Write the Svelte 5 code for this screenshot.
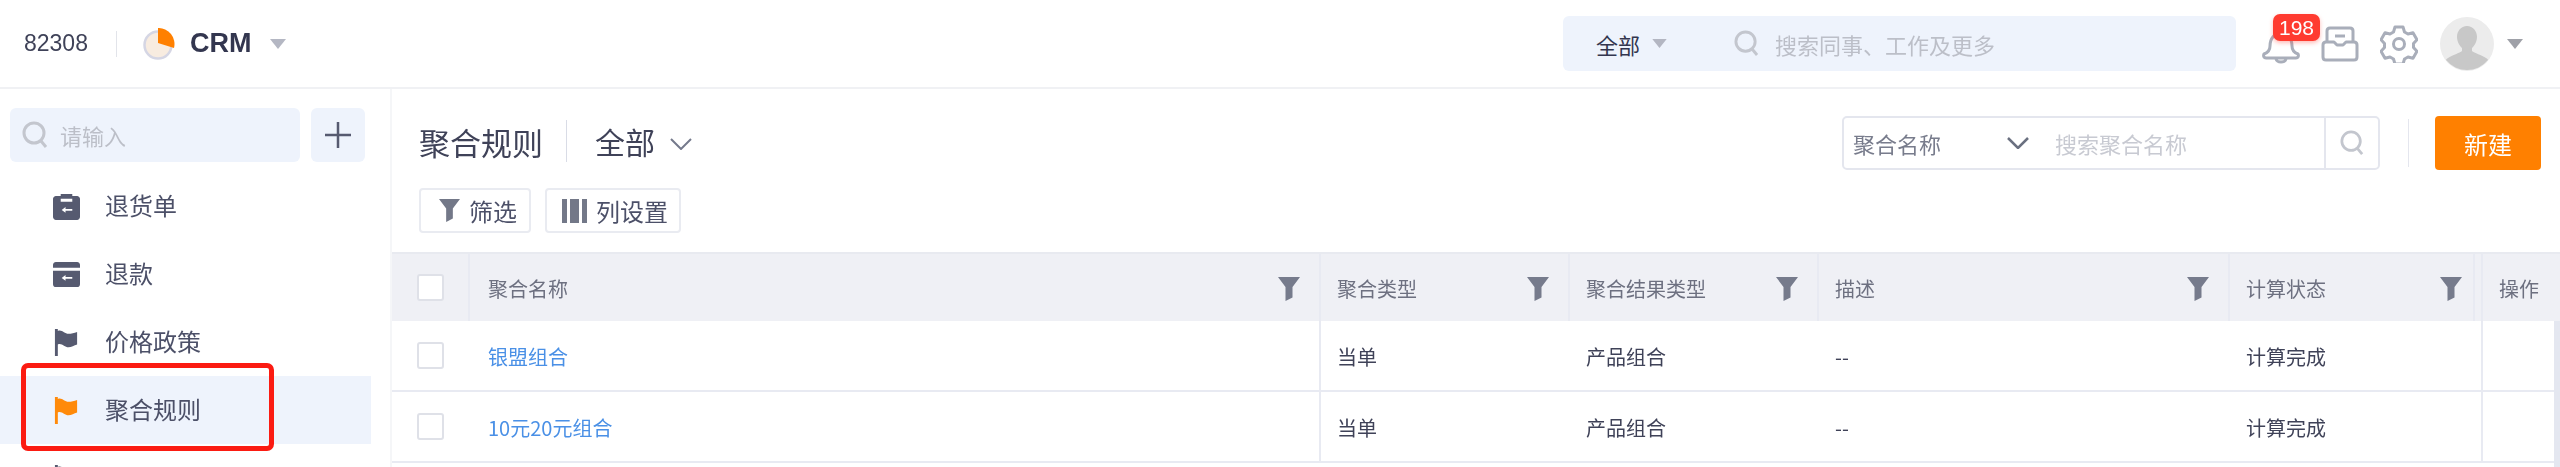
<script>
  const menu = [
    { label: "退货单", icon: "clipboard" },
    { label: "退款", icon: "refund" },
    { label: "价格政策", icon: "flag" },
    { label: "聚合规则", icon: "flag", active: true },
    { label: "", icon: "flag" },
  ];

  const columns = [
    { title: "聚合名称", width: 851, filter: true, divided: true },
    { title: "聚合类型", width: 249, filter: true },
    { title: "聚合结果类型", width: 249, filter: true },
    { title: "描述", width: 411, filter: true },
    { title: "计算状态", width: 253, filter: true, divided: true },
    { title: "操作", width: 71 },
  ];

  const rows = [
    ["银盟组合", "当单", "产品组合", "--", "计算完成"],
    ["10元20元组合", "当单", "产品组合", "--", "计算完成"],
  ];
</script>

{#snippet funnel(cls)}
  <svg class={cls} viewBox="0 0 22 24"><path d="M0 0h22l-7.500 10v10.500l-7 3.500V10z" /></svg>
{/snippet}

{#snippet caret(cls)}
  <svg class={cls} viewBox="0 0 16 10"><path d="M0 0h16l-8 10z" /></svg>
{/snippet}

{#snippet lens(cls)}
  <svg class={cls} viewBox="0 0 26 28" fill="none" stroke="currentColor" stroke-width="3">
    <circle cx="12" cy="12" r="10" /><path d="M19 20l5 6" />
  </svg>
{/snippet}

<div class="page">
  <header class="topbar">
    <span class="tenant">82308</span>
    <i class="vline"></i>
    <svg class="pie" viewBox="0 0 32 32">
      <circle cx="15" cy="17" r="13.500" fill="#f8ece0" stroke="#d5d6e4" stroke-width="2.500" />
      <path d="M15 0a16 16 0 0 1 16 20L15 15z" fill="#ff8000" />
    </svg>
    <span class="app">CRM</span>
    {@render caret("app-caret")}

    <div class="global-search">
      <span class="scope">全部</span>
      {@render caret("scope-caret")}
      {@render lens("global-lens")}
      <span class="global-hint">搜索同事、工作及更多</span>
    </div>

    <div class="tools">
      <div class="bell">
        <svg viewBox="0 0 38 36" fill="none" stroke="#a9aeba" stroke-width="3" stroke-linejoin="round">
          <path d="M2 25c3-1 6-3 6-8C8 9 13 4 19 4s11 5 11 13c0 5 3 7 6 8 1 2 0 4-2 4H4c-2 0-3-2-2-4z" />
          <path d="M14 30c1 4 9 4 10 0" />
        </svg>
        <span class="badge">198</span>
      </div>
      <svg class="tool" viewBox="0 0 38 36" fill="none" stroke="#a9aeba" stroke-width="3" stroke-linejoin="round">
        <path d="M6 16V5c0-2 1-3 3-3h20c2 0 3 1 3 3v11" />
        <path d="M2 19c0-2 1-3 3-3h8l3 3h6l3-3h8c2 0 3 1 3 3v12c0 2-1 3-3 3H5c-2 0-3-1-3-3z" />
        <path d="M14 10h10" />
      </svg>
      <svg class="tool gear" viewBox="0 0 38 38" fill="none" stroke="#a9aeba" stroke-width="3" stroke-linejoin="round">
        <path d="M15 2h8l1.500 5 3.500 2 5-1.200 4 6.900-3.500 3.800v4l3.500 3.800-4 6.900-5-1.200-3.500 2-1.500 5h-8l-1.500-5-3.500-2-5 1.200-4-6.900 3.500-3.800v-4L1 14.700l4-6.900 5 1.200 3.500-2z" />
        <circle cx="19" cy="19" r="5.500" />
      </svg>
      <div class="avatar">
        <svg viewBox="0 0 54 54">
          <circle cx="27" cy="27" r="27" fill="#ececec" />
          <path d="M27 9c6 0 10 5 10 11 0 5-3 9-5 11v3c2 2 10 4 14 7 1 1 2 1 2 2a27 27 0 0 1-42 0c0-1 1-1 2-2 4-3 12-5 14-7v-3c-2-2-5-6-5-11 0-6 4-11 10-11z" fill="#c8c8c8" />
        </svg>
      </div>
      {@render caret("avatar-caret")}
    </div>
  </header>

  <div class="body">
    <aside class="sidebar">
      <div class="side-search">
        <div class="side-input">
          {@render lens("side-lens")}
          <span>请输入</span>
        </div>
        <button class="add" aria-label="添加">
          <svg viewBox="0 0 26 26"><path d="M13 0v26M0 13h26" fill="none" stroke="#565a70" stroke-width="2.500" /></svg>
        </button>
      </div>
      <ul class="menu">
        {#each menu as item}
          <li class:active={item.active}>
            {#if item.icon === "clipboard"}
              <svg class="menu-icon" viewBox="0 0 28 28">
                <path d="M3 3h5V1h12v2h5c1.500 0 3 1.500 3 3v19c0 1.500-1.500 3-3 3H3c-1.500 0-3-1.500-3-3V6c0-1.500 1.500-3 3-3zM8 6v3h12V6z" fill-rule="evenodd" fill="#565a70" />
                <path d="M9 17.500l4-3v2h7v2h-7v2z" fill="#fff" />
              </svg>
            {:else if item.icon === "refund"}
              <svg class="menu-icon" viewBox="0 0 28 26">
                <path d="M3 0h22c1.500 0 3 1 3 3v3H0V3c0-2 1.500-3 3-3zM0 9h28v14c0 2-1.500 3-3 3H3c-1.500 0-3-1-3-3z" fill="#565a70" />
                <path d="M9 16.500l4-3v2h7v2h-7v2z" fill="#fff" />
              </svg>
            {:else}
              <svg class="menu-icon flag" viewBox="0 0 26 28">
                <path d="M1 0h3v2c4-2 7 3 11 3 3 0 6-1 9-2v13c-3 1-6 3-9 3-4 0-7-5-11-3v12H1z" />
              </svg>
            {/if}
            <span>{item.label}</span>
          </li>
        {/each}
      </ul>
      <div class="highlight"></div>
    </aside>

    <main class="main">
      <div class="head">
        <div class="head-left">
          <div class="title-row">
            <h1>聚合规则</h1>
            <i class="title-line"></i>
            <span class="view">全部</span>
            <svg class="view-chevron" viewBox="0 0 22 12"><path d="M1 1l10 10L21 1" fill="none" stroke="#757a8c" stroke-width="2" /></svg>
          </div>
          <div class="actions">
            <button class="ghost filter-btn">
              {@render funnel("btn-funnel")}
              筛选
            </button>
            <button class="ghost bars-btn">
              <svg class="bars" viewBox="0 0 25 24"><path d="M0 0h5v24H0zM8 0h9v24H8zM20 0h5v24h-5z" fill="#737888" /></svg>
              列设置
            </button>
          </div>
        </div>
        <div class="head-right">
          <div class="field">
            <span class="field-name">聚合名称</span>
            <svg class="field-chevron" viewBox="0 0 22 12"><path d="M1 1l10 10L21 1" fill="none" stroke="#6a7080" stroke-width="2.500" /></svg>
            <span class="field-hint">搜索聚合名称</span>
            <span class="field-btn">{@render lens("field-lens")}</span>
          </div>
          <i class="head-line"></i>
          <button class="primary">新建</button>
        </div>
      </div>

      <div class="table">
        <div class="row thead">
          <div class="check-cell"><span class="check"></span></div>
          {#each columns as col}
            <div class="cell" style={`width: ${col.width}px`}>
              <span>{col.title}</span>
              {#if col.filter}
                {@render funnel("col-funnel")}
              {/if}
            </div>
          {/each}
        </div>
        {#each rows as row}
          <div class="row tbody">
            <div class="check-cell"><span class="check"></span></div>
            {#each columns as col, i}
              <div class="cell" class:link={i === 0} class:divided={col.divided} style={`width: ${col.width}px`}>{row[i] ?? ""}</div>
            {/each}
          </div>
        {/each}
      </div>
      <div class="scrollbar"></div>
    </main>
  </div>
</div>

<style>
  :global(body) {
    margin: 0;
    background: #fff;
    overflow: hidden;
  }

  .page {
    width: 2560px;
    height: 467px;
    overflow: hidden;
    font-family: "Noto Sans CJK SC", "Noto Sans", sans-serif;
    color: #3f4258;
    filter: blur(0.6px);
  }

  .topbar {
    height: 87px;
    display: flex;
    align-items: center;
    padding-left: 24px;
    border-bottom: 2px solid #f0f1f4;
  }

  .tenant {
    font-family: "Liberation Sans", sans-serif;
    font-size: 23px;
    width: 92px;
  }

  .vline {
    width: 1px;
    height: 26px;
    background: #e2e4ea;
    margin-right: 26px;
  }

  .pie {
    width: 32px;
    height: 32px;
    margin-right: 15px;
  }

  .app {
    font-family: "Liberation Sans", sans-serif;
    font-size: 27px;
    font-weight: 700;
    color: #33364f;
    width: 80px;
  }

  :global(.app-caret) {
    width: 16px;
    height: 10px;
    fill: #b4b7c3;
    margin-right: 1277px;
  }

  .global-search {
    width: 673px;
    height: 55px;
    flex: none;
    display: flex;
    align-items: center;
    background: #eef3fc;
    border-radius: 6px;
    padding-left: 33px;
    box-sizing: border-box;
  }

  .scope {
    font-size: 22px;
    color: #33364f;
    margin-right: 12px;
  }

  :global(.scope-caret) {
    width: 15px;
    height: 9px;
    fill: #b3b6c2;
    margin-right: 67px;
  }

  :global(.global-lens) {
    width: 25px;
    height: 27px;
    color: #c3c6ce;
    margin-right: 16px;
  }

  .global-hint {
    font-size: 22px;
    color: #bcbfc8;
  }

  .tools {
    margin-left: 26px;
    display: flex;
    align-items: center;
    flex: none;
  }

  .bell {
    position: relative;
    width: 38px;
    height: 36px;
    margin-right: 21px;
    margin-top: 6px;
  }

  .bell svg {
    display: block;
    width: 38px;
    height: 36px;
  }

  .badge {
    position: absolute;
    left: 11px;
    top: -15px;
    width: 47px;
    height: 27px;
    border-radius: 7px;
    background: #ff3b30;
    color: #fff;
    font-family: "Liberation Sans", sans-serif;
    font-size: 21px;
    line-height: 27px;
    text-align: center;
    box-shadow: 0 2px 4px rgba(255, 59, 48, 0.35);
  }

  .tool {
    width: 38px;
    height: 36px;
    margin-right: 21px;
  }

  .gear {
    height: 38px;
    margin-right: 22px;
  }

  .avatar {
    width: 54px;
    height: 54px;
    margin-right: 13px;
  }

  .avatar svg {
    display: block;
    width: 54px;
    height: 54px;
  }

  :global(.avatar-caret) {
    width: 16px;
    height: 10px;
    fill: #9fa1a8;
  }

  .body {
    display: flex;
    height: 378px;
  }

  .sidebar {
    position: relative;
    width: 392px;
    flex: none;
    box-sizing: border-box;
    border-right: 2px solid #f5f6f8;
    padding-top: 19px;
  }

  .side-search {
    display: flex;
    gap: 11px;
    padding-left: 10px;
  }

  .side-input {
    width: 290px;
    height: 54px;
    display: flex;
    align-items: center;
    gap: 12px;
    padding-left: 12px;
    box-sizing: border-box;
    background: #eef3fc;
    border-radius: 6px;
    font-size: 22px;
    color: #bcbfc8;
  }

  :global(.side-lens) {
    width: 26px;
    height: 28px;
    color: #c3c6ce;
  }

  .add {
    width: 54px;
    height: 54px;
    padding: 0;
    display: flex;
    align-items: center;
    justify-content: center;
    background: #eef3fc;
    border: none;
    border-radius: 6px;
  }

  .add svg {
    width: 26px;
    height: 26px;
  }

  .menu {
    list-style: none;
    margin: 10px 0 0;
    padding: 0;
    width: 371px;
  }

  .menu li {
    height: 68px;
    display: flex;
    align-items: center;
    padding-left: 53px;
    box-sizing: border-box;
    font-size: 24px;
    color: #4c5068;
  }

  .menu li span {
    margin: 0 0 3px 25px;
  }

  .menu li.active {
    background: #eef3fc;
  }

  .menu-icon {
    width: 27px;
    height: 27px;
    flex: none;
  }

  .flag path {
    fill: #565a70;
  }

  .active .flag path {
    fill: #ff8a0a;
  }

  .highlight {
    position: absolute;
    left: 21px;
    top: 274px;
    width: 253px;
    height: 88px;
    box-sizing: border-box;
    border: 5px solid #fb1b12;
    border-radius: 7px;
  }

  .main {
    position: relative;
    flex: 1;
    min-width: 0;
  }

  .head {
    height: 163px;
    display: flex;
    justify-content: space-between;
    padding: 0 19px 0 27px;
    box-sizing: border-box;
  }

  .head-left {
    padding-top: 30px;
  }

  .title-row {
    height: 44px;
    display: flex;
    align-items: center;
  }

  h1 {
    margin: 0;
    font-size: 31px;
    font-weight: 400;
    color: #3f4258;
  }

  .title-line {
    width: 1px;
    height: 42px;
    background: #d9dce6;
    margin: 0 28px 0 23px;
  }

  .view {
    font-size: 30px;
    color: #3f4258;
    margin-right: 15px;
  }

  .view-chevron {
    width: 22px;
    height: 12px;
    margin-top: 5px;
  }

  .actions {
    display: flex;
    gap: 14px;
    margin-top: 25px;
  }

  .ghost {
    height: 45px;
    display: flex;
    align-items: center;
    background: #fff;
    border: 2px solid #e9ebf1;
    border-radius: 4px;
    font-family: inherit;
    font-size: 24px;
    color: #4c5068;
    gap: 9px;
  }

  :global(.btn-funnel) {
    width: 21px;
    height: 23px;
    fill: #737888;
  }

  .filter-btn {
    padding: 0 12px 0 18px;
  }

  .bars-btn {
    padding: 0 11px 0 15px;
  }

  .bars {
    width: 25px;
    height: 24px;
  }

  .head-right {
    display: flex;
    align-items: flex-start;
    padding-top: 27px;
  }

  .field {
    width: 538px;
    height: 54px;
    display: flex;
    align-items: center;
    box-sizing: border-box;
    border: 2px solid #e4e6ee;
    border-radius: 5px;
    padding-left: 9px;
    font-size: 22px;
  }

  .field-name {
    width: 154px;
    color: #787c8c;
  }

  .field-chevron {
    width: 22px;
    height: 12px;
    margin-right: 26px;
  }

  .field-hint {
    flex: 1;
    color: #c8cad2;
  }

  .field-btn {
    width: 52px;
    height: 100%;
    display: flex;
    align-items: center;
    justify-content: center;
    border-left: 2px solid #e4e6ee;
  }

  :global(.field-lens) {
    width: 24px;
    height: 26px;
    color: #c3c6ce;
  }

  .head-line {
    width: 1px;
    height: 48px;
    margin: 3px 26px 0 28px;
    background: #e4e6ee;
  }

  .primary {
    width: 106px;
    height: 54px;
    padding: 0;
    border: none;
    border-radius: 4px;
    background: #ff8000;
    color: #fff;
    font-family: inherit;
    font-size: 24px;
  }

  .table {
    border-top: 2px solid #e8eaf0;
  }

  .row {
    display: flex;
  }

  .thead {
    height: 67px;
    background: #eff0f5;
    font-size: 20px;
    color: #6d7080;
  }

  .tbody {
    height: 71px;
    box-sizing: border-box;
    border-bottom: 2px solid #e8eaf2;
    font-size: 20px;
    color: #3f4258;
  }

  .check-cell {
    width: 78px;
    flex: none;
    display: flex;
    align-items: center;
    padding-left: 25px;
    box-sizing: border-box;
  }

  .thead .check-cell {
    border-right: 2px solid #e8eaf2;
  }

  .check {
    width: 27px;
    height: 27px;
    box-sizing: border-box;
    background: #fff;
    border: 2px solid #dfe1e8;
    border-radius: 3px;
  }

  .cell {
    flex: none;
    display: flex;
    align-items: center;
    justify-content: space-between;
    padding: 2px 19px 0 16px;
    box-sizing: border-box;
    white-space: nowrap;
  }

  .thead .cell {
    border-right: 2px solid #e8eaf2;
  }

  .thead .cell:last-child {
    border-right: none;
  }

  .thead .cell:nth-last-child(2) {
    box-shadow: inset -6px 0 0 #eff0f5, inset -8px 0 0 #e8eaf2;
  }

  .tbody .divided {
    border-right: 2px solid #e8eaf2;
  }

  .check-cell + .cell {
    padding-left: 18px;
  }

  .link {
    color: #4a90e6;
  }

  :global(.col-funnel) {
    width: 22px;
    height: 24px;
    fill: #767b8c;
  }

  .scrollbar {
    position: absolute;
    right: 0;
    top: 232px;
    width: 6px;
    height: 146px;
    background: #e4e7f0;
  }
</style>
